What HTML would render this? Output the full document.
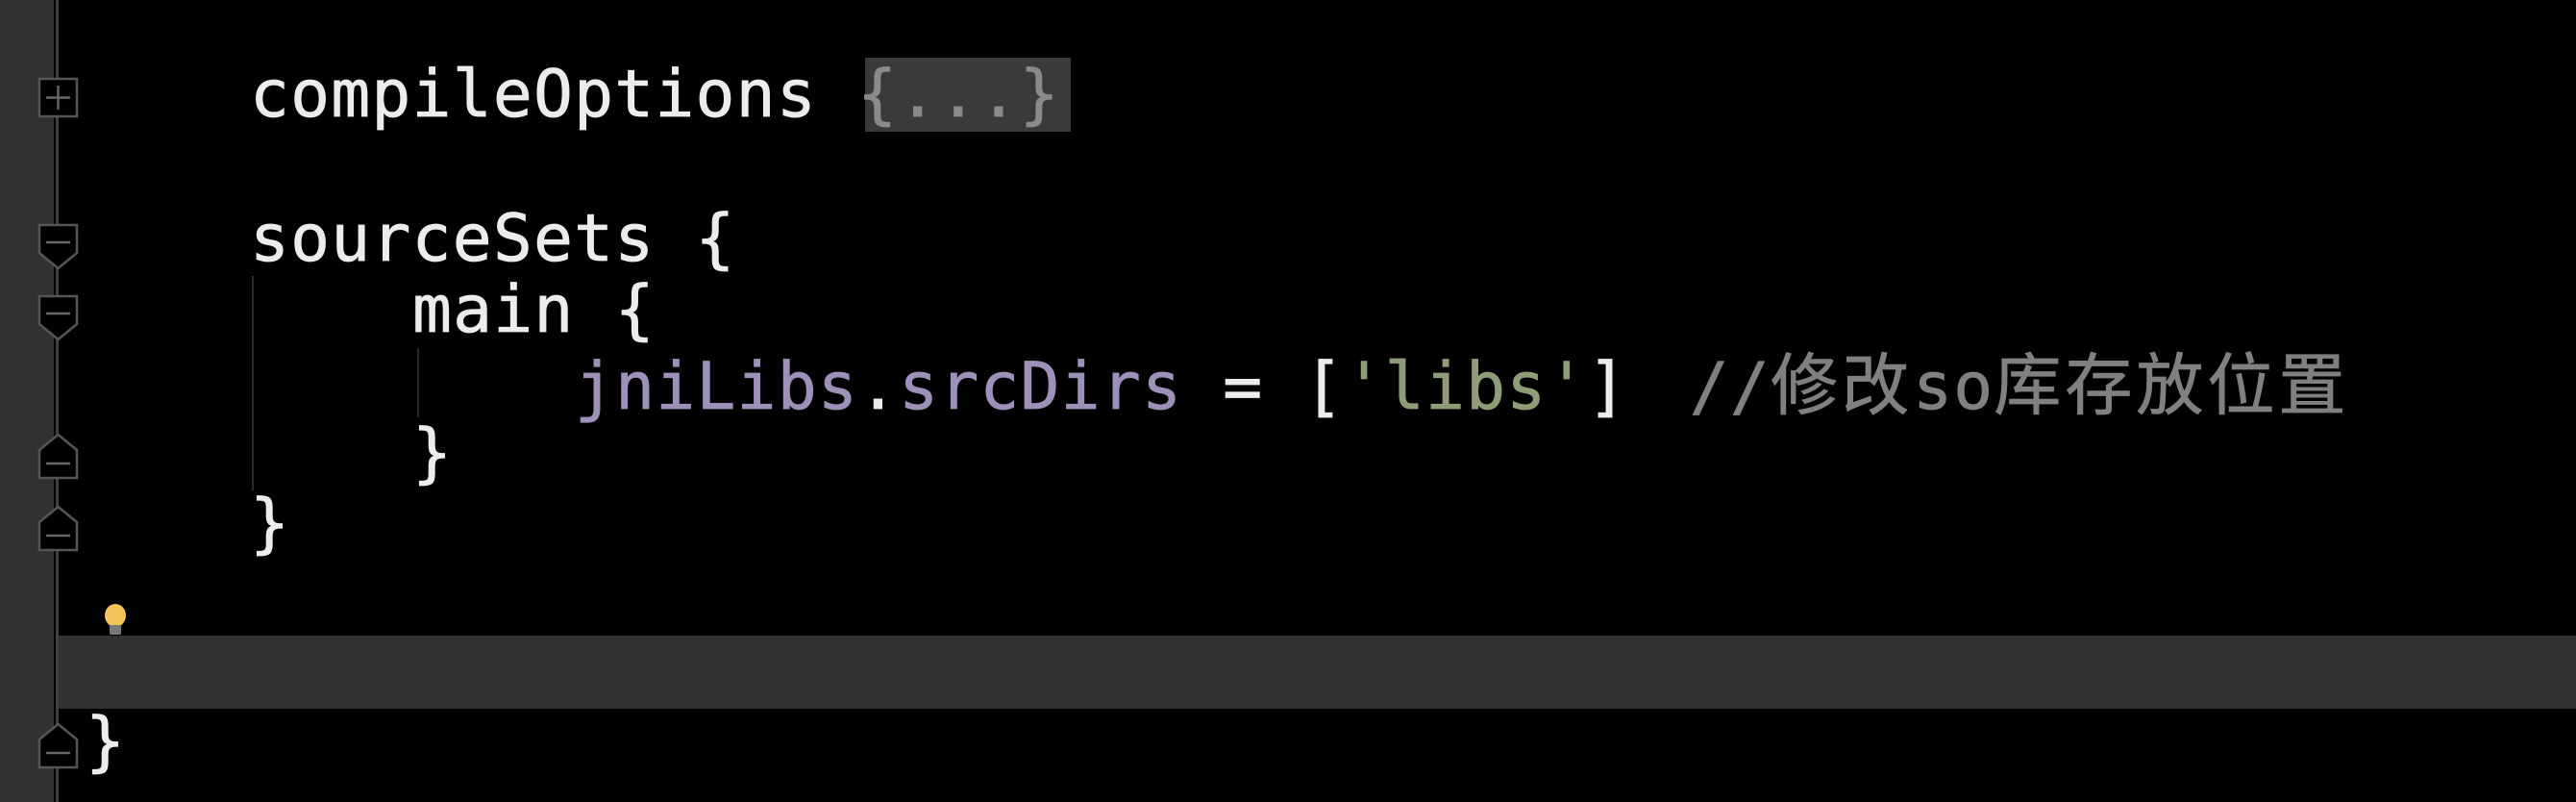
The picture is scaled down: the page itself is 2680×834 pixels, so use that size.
<!DOCTYPE html>
<html><head><meta charset="utf-8"><style>
html,body{margin:0;padding:0;background:#000;width:2680px;height:834px;overflow:hidden;position:relative}
.g{position:absolute;left:0;top:0;width:56px;height:834px;background:#2f3133}
.gl{position:absolute;left:58px;top:0;width:3px;height:834px;background:#3e4042}
.band{position:absolute;left:61px;top:661px;width:2619px;height:76px;background:#323232}
.l{position:absolute;height:74px;line-height:74px;font-family:"DejaVu Sans Mono","Liberation Mono","Noto Sans CJK SC",monospace;font-size:68px;letter-spacing:1.2px;color:#ececec;white-space:pre;-webkit-text-stroke:0.8px currentColor}
.p{color:#9d90b9}.s{color:#8e9c78}.c{color:#808080}
.cj{font-family:"Noto Sans CJK SC",sans-serif;font-size:70px;letter-spacing:4px}
.fold{position:absolute;left:900px;top:60px;width:214px;height:77px;background:#3a3a3a}
.ig{position:absolute;width:2px;background:#2a2a2a}
svg{position:absolute}
</style></head><body>
<div class="g"></div><div class="gl"></div>
<div class="band"></div>
<div class="fold"></div>
<div class="ig" style="left:262px;top:287px;height:223px"></div>
<div class="ig" style="left:434px;top:362px;height:72px"></div>
<div class="l" style="left:260px;top:62px">compileOptions <span style="color:#8a8a8a">{...}</span></div>
<div class="l" style="left:260px;top:212px">sourceSets {</div>
<div class="l" style="left:429px;top:286px">main {</div>
<div class="l" style="left:598px;top:359px"><span class="p">jniLibs</span>.<span class="p">srcDirs</span> = [<span class="s">'libs'</span>] <span class="c" style="margin-left:22px">//<span class="cj">修改</span>so<span class="cj">库存放位置</span></span></div>
<div class="l" style="left:429px;top:435px">}</div>
<div class="l" style="left:260px;top:508px">}</div>
<div class="l" style="left:89px;top:735px">}</div>
<svg width="2680" height="834" style="left:0;top:0">
<g fill="#000" stroke="#555" stroke-width="2.5">
<rect x="41" y="82" width="39" height="39"/>
<path d="M41 234H80V263L60.5 279L41 263Z"/>
<path d="M41 308H80V337L60.5 353L41 337Z"/>
<path d="M41 497H80V468L60.5 452L41 468Z"/>
<path d="M41 572H80V543L60.5 527L41 543Z"/>
<path d="M41 798H80V769L60.5 753L41 769Z"/>
</g>
<g stroke="#666" stroke-width="2.5">
<path d="M48 101.5H73M60.5 89V114"/>
<path d="M48 252H73M48 326H73M48 482H73M48 557H73M48 783H73"/>
</g>
<ellipse cx="120" cy="640" rx="11" ry="12" fill="#f2c45a"/>
<rect x="114" y="650" width="12" height="10" rx="2" fill="#7a7a7a"/>
</svg>
</body></html>
